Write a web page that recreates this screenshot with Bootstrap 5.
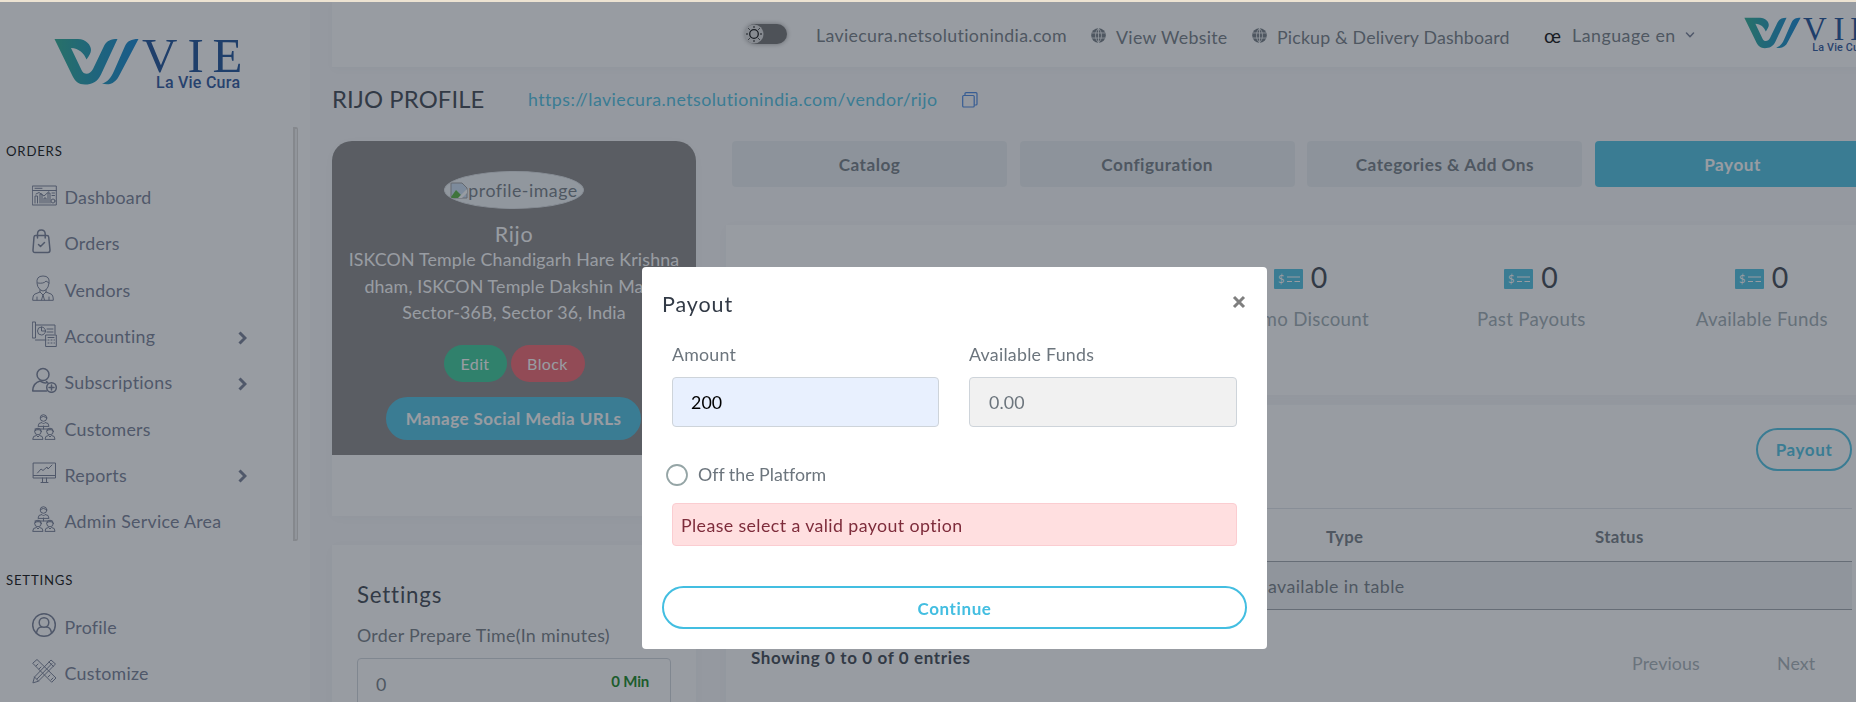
<!DOCTYPE html>
<html lang="en">
<head>
<meta charset="utf-8">
<title>Rijo Profile - Payout</title>
<link href="https://cdn.jsdelivr.net/npm/bootstrap@5.3.0/dist/css/bootstrap.min.css" rel="stylesheet">
<script src="https://cdn.jsdelivr.net/npm/bootstrap@5.3.0/dist/js/bootstrap.bundle.min.js"></script>
<style>
:root{--brand:#43bee1;--ink:#6c757d}
html,body{height:702px;overflow:hidden}
body{font-family:Lato,"Open Sans",sans-serif;font-size:17.8px;color:var(--ink);background:#f9f9fb;line-height:27px;letter-spacing:.12px;font-variant-ligatures:none}
.strip{height:2px;background:#ede3d2;position:relative;z-index:2000}
.shell{width:1909px;height:700px;overflow:hidden}
/* sidebar */
.side{width:310px;background:#fff;flex:none}
.side-logo{height:125px;padding:36px 0 0 54px}
.side-menu{border-right:5px solid #d9d7d5;border-radius:2px;width:298px;height:414px;position:relative}
.side-menu::after{content:"";position:absolute;right:-4px;top:2px;bottom:2px;width:2px;background:#f0f0f0}
.side-title{font-size:13.2px;letter-spacing:.78px;color:#000;padding-left:6px;height:48px;line-height:49px}
.side-title.set{height:64px;line-height:79px}
.side a{height:46.3px;display:flex;align-items:center;color:#6e768e;text-decoration:none;padding-left:32px;letter-spacing:.26px;padding-bottom:1px}
.side a svg.ic{width:25px;height:26px;margin-right:7.5px;flex:none;margin-top:-5px}
.ic{fill:none;stroke:#6e768e;stroke-width:1;stroke-linejoin:round;stroke-linecap:round}
.ic.bold{stroke-width:1.5}
.side a svg.chev{margin:2px 46px 0 auto;stroke-width:3;stroke-linecap:butt;stroke-linejoin:miter;width:9px;height:14px}
/* top bar */
.top{height:66px;background:#fff;margin-left:22px;border-bottom:1px solid #f3f4f6;box-shadow:0 2px 10px rgba(56,65,74,.04)}
.tog{width:42px;height:20px;border-radius:10px;background:#6a6a6a;box-shadow:0 0 5px #999}
.tog svg{display:block}
.top .t{white-space:nowrap}
/* main */
.ttl{font-size:23.8px;color:#323a46;font-weight:400}
.url{color:var(--brand);letter-spacing:.44px}
.prof{background:#828080;border-radius:20px 20px 0 0;height:314px;color:#fff;text-align:center}
.white{background:#fff}
.soft{box-shadow:0 2px 14px rgba(56,65,74,.04)}
.avatar{width:140px;height:38px;border-radius:50%;background:#f1f5f7;border:1px solid #dee2e6;color:#6c757d;overflow:hidden;margin:30px auto 0;display:flex;justify-content:center;align-items:center;letter-spacing:.5px}
.pill{border-radius:40px;border:2px solid var(--brand);color:var(--brand);font-weight:700;font-size:17px;display:flex;align-items:center;justify-content:center;padding:0;line-height:1;letter-spacing:.6px}
.tabx{width:275px;height:46px;border-radius:4px;background:#e9edf0;font-weight:700;color:#6c757d;font-size:17.2px;display:flex;align-items:center;justify-content:center;letter-spacing:.5px}
.tabx.active{background:var(--brand);color:#fff}
.stat{width:230.5px;text-align:center;font-size:18.7px;color:#98a6ad;letter-spacing:.3px}
.stat b{font-size:28.5px;font-weight:400;color:#323a46;line-height:40px}
.stat svg{margin:-8px 8px 0 0}
.stat div{margin-top:9px}
.grid-t{height:102px;border-top:1px solid #dfe3e8}
.grid-t .hd{height:53px;line-height:55px;border-bottom:1.5px solid #9aa0a6;font-weight:700;font-size:16.8px;letter-spacing:.35px}
.grid-t .bd{height:48px;line-height:49px;background:#eef1f3;border-bottom:1.5px solid #9aa0a6;text-align:center;letter-spacing:.4px}
.inp{border:1px solid #ced4da;border-radius:4px;height:50px;padding:0 19px;display:flex;align-items:center}
.modal-backdrop{--bs-backdrop-bg:#323a46;top:2px}
.modal{width:1909px;overflow:hidden}
.modal-dialog{width:625px;max-width:625px;margin:267px auto 0}
.modal-content{height:382px;border:0;border-radius:4px;color:#6c757d;padding:0 20px}
.err{height:43px;border:1px solid #fbcdd1;background:#ffdfe0;color:#7e2c3b;border-radius:4px;margin:0 10px;padding-left:8px;line-height:43px;letter-spacing:.4px}
</style>
</head>
<body>
<svg width="0" height="0" class="position-absolute">
 <defs>
  <linearGradient id="lg" x1="0" x2="1"><stop offset="0" stop-color="#1fa88c"/><stop offset=".5" stop-color="#0c8fb4"/><stop offset="1" stop-color="#007ccf"/></linearGradient>
  <symbol id="logo" viewBox="0 0 188 52">
   <path fill="url(#lg)" d="M.5 1H24C32 1 37 7 37 12C37 15 35 18 32.500 21.500C30 15 25 10.500 17 10L27.500 32C30 37.500 36 37 39 31L50 8C53 2.500 57 1 63.500 1L47 36.500C43.500 44 38 46.500 31 46.500C24.500 46.500 21 43 18.500 38ZM84.500 1C77 1 73.500 3 71 8L60 33C57 40 53 44.500 48 45.500C56 48 62 44.500 65.500 37Z"/>
   <text x="88 133.500 158.500" y="34" font-family="Liberation Serif" font-size="49" letter-spacing="0" fill="#0d4490">VIE</text>
   <text x="102" y="50" font-family="Roboto" font-size="16" font-weight="500" textLength="84" letter-spacing="0" fill="#1a4a96">La Vie Cura</text>
  </symbol>
  <symbol id="globe" viewBox="0 0 16 16"><circle cx="8" cy="8" r="7.800" fill="#6c757d"/><path d="M8 0V16M.5 5.300H15.500M.5 10.700H15.500M8 .5C3.800 4 3.800 12 8 15.500C12.200 12 12.200 4 8 .5" fill="none" stroke="#fff" stroke-width=".8"/></symbol>
  <symbol id="team" viewBox="0 0 25 26"><circle cx="11.500" cy="4" r="3.300"/><path d="M8.500 3.500Q11 1 14.500 3.500M6 12Q6 8.500 10 8.500L11.500 10L13 8.500Q17 8.500 17 12ZM11.500 12V15M3 15H20"/><circle cx="6" cy="17.500" r="3.300"/><circle cx="18" cy="17.500" r="3.300"/><path d="M2.700 17Q6 14 9.300 17M14.700 17Q18 14 21.300 17M.7 25Q.7 21.500 4.500 21.500L6 23L7.500 21.500Q11 21.500 11 25ZM13 25Q13 21.500 16.500 21.500L18 23L19.500 21.500Q23 21.500 23 25Z"/></symbol>
  <symbol id="cheque" viewBox="0 0 29 20"><rect width="29" height="20" rx="1" fill="#43bee1"/><path d="M13 8H26M13 12.500H18M20.500 12.500H26" stroke="#fff" stroke-width="1.100"/><text x="4" y="13.500" font-size="11" font-family="Lato" fill="#fff">$</text></symbol>
  <symbol id="chev" viewBox="0 0 9 14"><path d="M1.500 1.500L7 7L1.500 12.500"/></symbol>
 </defs>
</svg>
<div class="strip"></div>
<div class="shell d-flex">
 <aside class="side">
  <div class="side-logo"><svg width="188" height="52"><use href="#logo"/></svg></div>
  <nav class="side-menu">
   <div class="side-title">ORDERS</div>
   <a href="#"><svg class="ic" viewBox="0 0 25 26"><path d="M.7 4H24.300V23H.7ZM.7 8.500H24.300M3 6.300H10M3 21V14H5.500V21M8 21V12H10V21M12 21V16H14V21M16 21V11H18V21M4 12L7 10.500L12 14L17 9.500M20 11H22.500M20 13.500H22.500"/><circle cx="21" cy="19" r="2"/></svg>Dashboard</a>
   <a href="#"><svg class="ic bold" viewBox="0 0 25 26"><path d="M3.500 7.500H15Q16.500 7.500 16.700 9L18 22Q18 24.500 16 24.500H3Q.8 24.500 1 22L2 9Q2.200 7.500 3.500 7.500ZM5.500 10V6Q5.500 2 9.300 2T13.200 6V10M6.500 16.500L8.500 18.500L12.500 14.500"/></svg>Orders</a>
   <a href="#"><svg class="ic" viewBox="0 0 25 26"><path d="M5 8Q4 1 11 1T17 8L16 12Q14 16 11 16T6 12ZM5.500 8Q12 9 14 6L17 8M8 15V17L3 19Q.7 20 .7 25.300H21.300Q21.300 20 19 19L14 17V15M8 17L11 20L14 17M11 20L9.500 25M11 20L12.500 25M5 22V25M17 22V25"/></svg>Vendors</a>
   <a href="#"><svg class="ic" viewBox="0 0 25 26"><path d="M.7 1H3.500V17H.7ZM3.500 4H23V13M3.500 19H14M14 14H24.300V25.500H14ZM16 16.500H22M15 8H21M15 11H21M16 19H17M19 19H20M22 19H22.500M16 22H17M19 22H20M22 22H22.500"/><circle cx="9.500" cy="10" r="4"/><path d="M9.500 6V10H13.500"/></svg>Accounting<svg class="ic chev"><use href="#chev"/></svg></a>
   <a href="#"><svg class="ic bold" viewBox="0 0 25 26"><circle cx="11" cy="7.500" r="6"/><path d="M14.500 24H.7Q1 16 8 14Q13 17 15 15.500M16 16L14.500 14.500"/><circle cx="19.500" cy="20.500" r="4.800"/><path d="M17 20.500H22M19.500 18V23"/></svg>Subscriptions<svg class="ic chev"><use href="#chev"/></svg></a>
   <a href="#"><svg class="ic" viewBox="0 0 25 26"><use href="#team"/></svg>Customers</a>
   <a href="#"><svg class="ic" viewBox="0 0 25 26"><path d="M1.500 3H23.500V18H1.500ZM1.500 15.500H23.500M10.500 18V22M14.500 18V22M9 22.500H16M5.500 13L9 9L11 10.500L15 7L16 9L20 5"/></svg>Reports<svg class="ic chev"><use href="#chev"/></svg></a>
   <a href="#"><svg class="ic" viewBox="0 0 25 26"><use href="#team"/></svg>Admin Service Area</a>
  </nav>
  <div class="side-title set">SETTINGS</div>
  <a href="#"><svg class="ic bold" viewBox="0 0 25 26"><circle cx="12" cy="13" r="11.300"/><circle cx="12" cy="10.500" r="4.800"/><path d="M4.500 21Q5.500 15 9.500 15M19.500 21Q18.500 15 14.500 15"/></svg>Profile</a>
  <a href="#"><svg class="ic" viewBox="0 0 25 26"><path d="M1 5L5 1.500L24 20L20 24ZM4 8L6 6M7 11L9 9M16 19L18 17M19 22L21 20M1 24.500L2.500 19L19 2L23.500 6L6.500 23ZM17 4L21.500 8.500M2.500 19L6.500 23M5 21L20 5.500"/></svg>Customize</a>
 </aside>

 <main class="flex-grow-1">
  <header class="top d-flex">
   <div class="tog" style="margin:22px 0 0 413px"><svg width="20" height="20"><circle cx="9" cy="10" r="9.500" fill="#ddd"/><circle cx="9" cy="10" r="4.300" fill="none" stroke="#000" stroke-width="1.300"/><path d="M9 2V4M9 16V18M1 10H3M15 10H17M3.300 4.300L4.700 5.700M13.300 14.300L14.700 15.700M3.300 15.700L4.700 14.300M13.300 5.700L14.700 4.300" stroke="#000"/></svg></div>
   <div class="t" style="margin:19.500px 0 0 29px;width:275px;letter-spacing:.33px">Laviecura.netsolutionindia.com</div>
   <svg width="15" height="15" style="margin-top:26px"><use href="#globe"/></svg>
   <div class="t" style="margin:21.500px 0 0 10px;width:136px;letter-spacing:.3px">View Website</div>
   <svg width="15" height="15" style="margin-top:26px"><use href="#globe"/></svg>
   <div class="t" style="margin:21.500px 0 0 10px;width:267px;letter-spacing:.17px">Pickup &amp; Delivery Dashboard</div>
   <div class="t text-black" style="margin:19.500px 0 0;width:28px;font-size:19.500px">œ</div>
   <div class="t" style="margin:19.500px 0 0;width:113px;letter-spacing:.5px">Language en</div>
   <svg class="ic bold" width="10" height="7" style="margin-top:30px"><path d="M1.500 1L5 4.700L8.500 1"/></svg>
   <svg width="126" height="35" viewBox="0 0 126 35" style="margin:15px 0 0 49px"><use href="#logo" width="126" height="35"/></svg>
  </header>
  <div class="d-flex align-items-center" style="height:63px;padding-left:22px">
   <h1 class="ttl m-0" style="width:196px">RIJO PROFILE</h1>
   <span class="url" style="width:434px">https://laviecura.netsolutionindia.com/vendor/rijo</span>
   <svg width="16" height="16" fill="none" stroke="#3c7fe0" stroke-width="1.200"><rect x=".7" y="3.500" width="11.500" height="11.500" rx="1"/><path d="M3 3.500V1.500Q3 .7 4 .7H14Q15 .7 15 1.700V12Q15 13 14 13H12.500"/></svg>
  </div>
  <div class="d-flex" style="padding:10px 0 0 22px">
   <div style="width:364px">
    <section class="white soft" style="height:375px;border-radius:20px 20px 0 0">
     <div class="prof overflow-hidden">
      <div class="avatar"><svg width="18" height="17"><path d="M1 1H12L17 6V16H1Z" fill="#c9dcf3" stroke="#999"/><path d="M1 15L6 8L11 13L9 16H1Z" fill="#4caf32"/><path d="M17 7L8 16H12L17 11Z" fill="#fff"/></svg><span>profile-image</span></div>
      <div style="font-size:21.5px;height:36px;line-height:50px;letter-spacing:.7px">Rijo</div>
      <div style="height:80px;line-height:26.700px;margin-top:1px;letter-spacing:.17px">ISKCON Temple Chandigarh Hare Krishna<br>dham, ISKCON Temple Dakshin Marg,<br>Sector-36B, Sector 36, India</div>
      <div class="d-flex justify-content-center" style="gap:4px;margin:19px 0 15px">
       <span class="pill border-0 fw-normal text-white" style="width:63px;height:37px;background:#2fc893;font-size:16px;letter-spacing:.4px">Edit</span>
       <span class="pill border-0 fw-normal text-white" style="width:74px;height:37px;background:#f25c66;font-size:16px;letter-spacing:.4px">Block</span>
      </div>
      <span class="pill text-white" style="width:255px;height:43px;background:var(--brand);margin-left:54px;letter-spacing:.46px">Manage Social Media URLs</span>
     </div>
    </section>
    <section class="white soft" style="margin-top:29px;height:200px;padding:36px 25px">
     <div style="font-size:22.3px;color:#323a46;letter-spacing:.8px">Settings</div>
     <div style="margin:14px 0 9px;letter-spacing:.3px">Order Prepare Time(In minutes)</div>
     <div class="inp justify-content-between" style="height:52px;padding:0 21px 0 18px"><span>0</span><b style="color:#07800f;font-size:15px;margin-top:-5px;letter-spacing:-.2px">0 Min</b></div>
    </section>
   </div>
   <div style="margin-left:36px;width:1151px">
    <div class="d-flex" style="gap:12.700px">
     <div class="tabx">Catalog</div><div class="tabx">Configuration</div><div class="tabx">Categories &amp; Add Ons</div><div class="tabx active">Payout</div>
    </div>
    <section class="white soft d-flex justify-content-end" style="margin:38px 0 0 -6px;height:170px;padding-top:32px;padding-right:6px">
     <div class="stat"><svg width="29" height="20"><use href="#cheque"/></svg><b>0</b><div>Promo Discount</div></div>
     <div class="stat"><svg width="29" height="20"><use href="#cheque"/></svg><b>0</b><div>Past Payouts</div></div>
     <div class="stat"><svg width="29" height="20"><use href="#cheque"/></svg><b>0</b><div>Available Funds</div></div>
    </section>
    <section class="white soft" style="margin:10px 0 0 -6px;height:400px;padding:23px 31px 0 25px">
     <div class="pill ms-auto" style="width:96px;height:43px;margin-bottom:37px">Payout</div>
     <div class="grid-t">
      <div class="hd d-flex"><span style="width:575px"></span><span style="width:269px">Type</span><span>Status</span></div>
      <div class="bd">No data available in table</div>
     </div>
     <div class="d-flex" style="padding-top:33.500px"><b style="color:#323a46;font-size:17px;width:881px;letter-spacing:.62px">Showing 0 to 0 of 0 entries</b><span style="color:#a3adb3;width:145px;padding-top:6px">Previous</span><span style="color:#a3adb3;padding-top:6px">Next</span></div>
    </section>
   </div>
  </div>
 </main>
</div>

<div class="modal-backdrop show"></div>
<div class="modal d-block" tabindex="-1">
 <div class="modal-dialog">
  <div class="modal-content">
   <div class="d-flex justify-content-between" style="padding-top:24px;height:74px"><h4 class="m-0 fw-normal" style="font-size:21.500px;color:#323a46;line-height:27px;letter-spacing:.9px">Payout</h4>
    <svg width="14" height="14" style="margin:4px 1px 0 0"><path d="M2 2L12 12M12 2L2 12" stroke="#7f7f7f" stroke-width="3"/></svg></div>
   <div class="d-flex" style="padding:0 10px;gap:30px">
    <div style="width:267px"><div style="height:36px;letter-spacing:.2px">Amount</div><div class="inp text-black" style="background:#e8f0fe;padding-left:18px">200</div></div>
    <div style="width:268px"><div style="height:36px;letter-spacing:.25px">Available Funds</div><div class="inp" style="background:#f1f1f1">0.00</div></div>
   </div>
   <div class="d-flex align-items-center" style="height:30px;margin:32.500px 0 13.500px 4px;letter-spacing:0"><svg width="22" height="22" style="margin-right:10px"><circle cx="11" cy="11" r="10" fill="#fff" stroke="#95a5a6" stroke-width="1.800"/></svg>Off the Platform</div>
   <div class="err">Please select a valid payout option</div>
   <button class="pill bg-white w-100" style="height:43px;margin-top:40px;padding-top:2px">Continue</button>
  </div>
 </div>
</div>
</body>
</html>
